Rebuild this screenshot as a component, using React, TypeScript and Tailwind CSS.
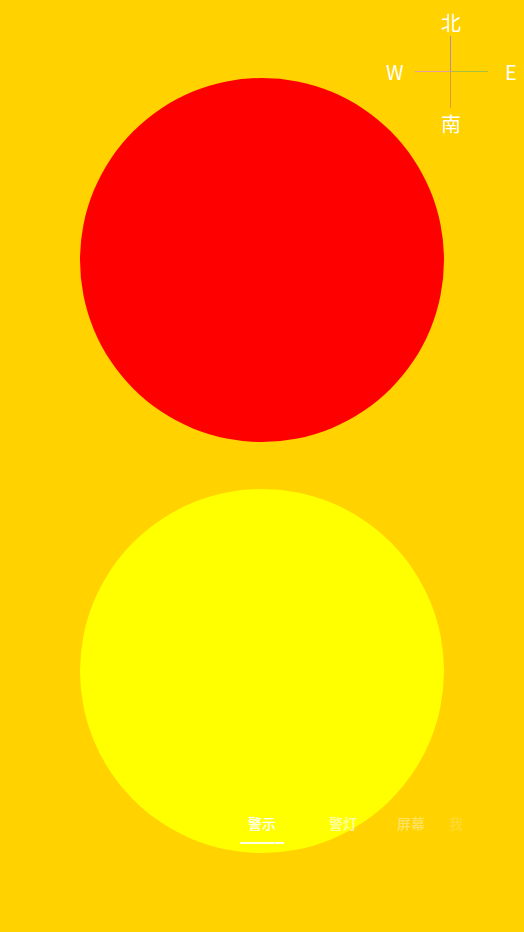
const cjk = { fontFamily: '"Noto Sans CJK SC", "Noto Sans", sans-serif' }

function Compass() {
  return (
    <div className="absolute right-0 top-[10px] w-[144px] flex flex-col items-center text-white text-[20px]" style={cjk}>
      <span className="leading-[26px] -ml-[2px]">北</span>
      <div className="flex items-center w-full pl-[6px]">
        <span className="w-[18px] leading-[24px]">W</span>
        <div className="ml-[11px] grid grid-cols-[36px_37px] grid-rows-[36px_36px]">
          <div className="border-r border-b border-r-[#b0909a] border-b-[#e8a0a0]" />
          <div className="border-b border-b-[#a8c040]" />
          <div className="border-r border-r-[#e09a30]" />
          <div />
        </div>
        <span className="ml-[17px] leading-[24px]">E</span>
      </div>
      <span className="leading-[26px] -ml-[2px] mt-[3px]">南</span>
    </div>
  )
}

function Tabs() {
  return (
    <div className="absolute left-0 top-[812px] w-full flex items-start pl-[240px] text-[14px] leading-[22px] font-medium" style={cjk}>
      <div className="w-[44px] flex flex-col items-center text-white">
        <span>警示</span>
        <div className="mt-[8px] w-[44px] h-[2px] bg-white/90" />
      </div>
      <span className="ml-[38px] w-[42px] text-center text-white/70">警灯</span>
      <span className="ml-[26px] w-[42px] text-center text-white/40">屏幕</span>
      <span className="ml-[14px] w-[20px] text-center text-white/20">我</span>
    </div>
  )
}

export default function App() {
  return (
    <div className="relative w-[524px] h-[932px] overflow-hidden bg-[#ffd200]">
      <div className="flex flex-col items-center pt-[78px] gap-[47px] pr-[1px]">
        <div className="w-[364px] h-[364px] rounded-full bg-[#ff0000]" />
        <div className="w-[364px] h-[364px] rounded-full bg-[#ffff00]" />
      </div>
      <Compass />
      <Tabs />
    </div>
  )
}
